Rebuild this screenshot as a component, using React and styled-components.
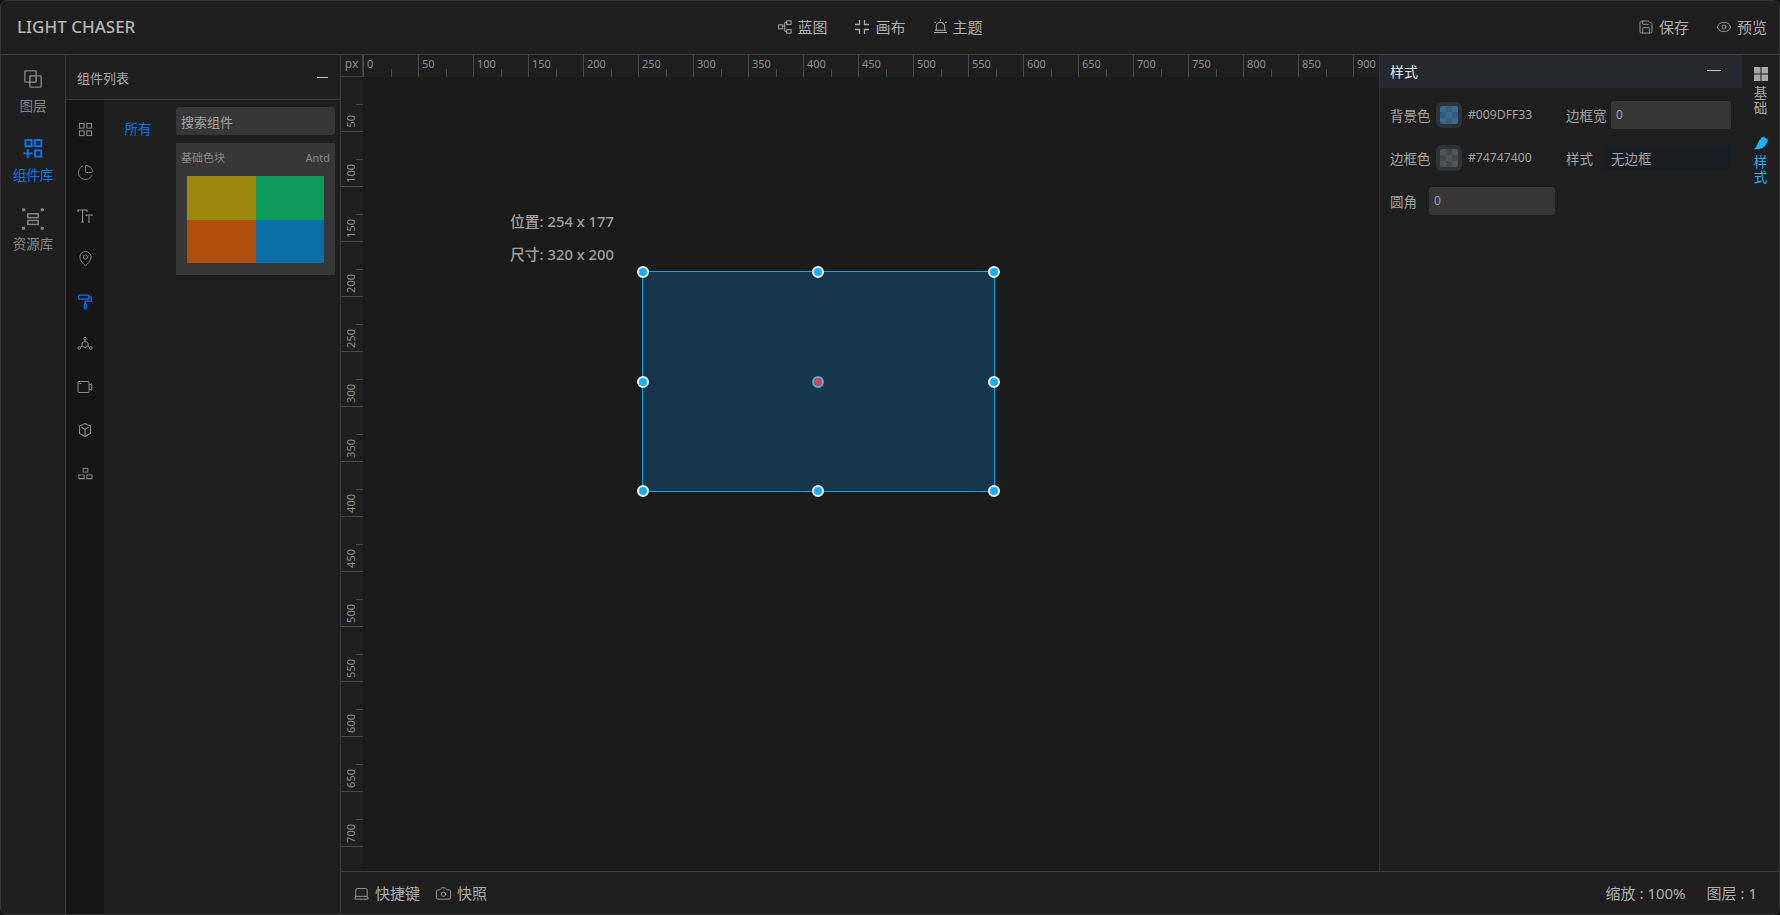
import React from 'react'
import styled, { createGlobalStyle } from 'styled-components'
import { PieChart, MapPin, Save, Eye, Laptop, Camera } from 'lucide-react'

const BLUE = '#0a74f5'
const SKY = '#1fb0ff'
const SCALE = 55

const Global = createGlobalStyle`
  * { box-sizing: border-box; }
  html, body { margin: 0; padding: 0; background: #141414; }
  body { font-family: "Noto Sans", "Noto Sans CJK SC", sans-serif; color: #a9a9a9; }
`

const Frame = styled.div`
  width: 1780px;
  height: 915px;
  display: flex;
  flex-direction: column;
  overflow: hidden;
  background: #1f1f1f;
  border: 1px solid #353535;
  border-radius: 7px;
`

const Header = styled.header`
  flex: 0 0 54px;
  display: grid;
  grid-template-columns: 1fr auto 1fr;
  align-items: center;
  padding: 0 12px 2px 16px;
  border-bottom: 1px solid #404040;
`
const Logo = styled.div`
  font-size: 17px;
  font-weight: 500;
  color: #b4b4b4;
`
const CenterNav = styled.nav`
  display: flex;
  gap: 27px;
  margin-right: 23px;
`
const RightNav = styled.nav`
  display: flex;
  justify-content: flex-end;
  gap: 27px;
`
const NavItem = styled.div`
  display: flex;
  align-items: center;
  gap: 5px;
  font-size: 15px;
  line-height: 20px;
  color: #adadad;
`

const Body = styled.div`
  flex: 1;
  min-height: 0;
  display: flex;
`

const Rail = styled.aside`
  flex: 0 0 65px;
  padding-top: 14px;
  display: flex;
  flex-direction: column;
  gap: 23px;
  border-right: 1px solid #3a3a3a;
`
const RailItem = styled.div`
  height: 46px;
  display: flex;
  flex-direction: column;
  align-items: center;
  justify-content: space-between;
  font-size: 13.5px;
  line-height: 18px;
  color: ${p => (p.$active ? BLUE : '#858585')};
`

const Panel = styled.section`
  flex: 0 0 275px;
  display: flex;
  flex-direction: column;
  border-right: 1px solid #3a3a3a;
`
const PanelHead = styled.div`
  flex: 0 0 45px;
  display: flex;
  align-items: center;
  justify-content: space-between;
  padding: 0 12px 0 11px;
  font-size: 13px;
  color: #a9a9a9;
  border-bottom: 1px solid #3a3a3a;
`
const Dash = styled.span`
  width: ${p => p.$w || 11}px;
  height: 1px;
  background: #c8c8c8;
`
const PanelBody = styled.div`
  flex: 1;
  display: flex;
`
const IconCol = styled.div`
  flex: 0 0 38px;
  padding-top: 8.5px;
  background: #161616;
`
const IconCell = styled.div`
  height: 42.9px;
  display: flex;
  align-items: center;
  justify-content: center;
  color: ${p => (p.$active ? BLUE : '#8d8d8d')};
`
const CatCol = styled.div`
  flex: 0 0 72px;
  padding: 20px 4px 0 0;
  text-align: center;
  font-size: 13.5px;
  line-height: 18px;
  color: ${BLUE};
`
const ListCol = styled.div`
  flex: 0 0 159px;
  padding-top: 7px;
`
const Search = styled.div`
  height: 28px;
  padding: 0 5px;
  display: flex;
  align-items: center;
  font-size: 13px;
  color: #a4a4a4;
  background: #373737;
  border-radius: 3px;
`
const Card = styled.div`
  height: 132px;
  margin-top: 8px;
  padding: 6px 5px 0;
  background: #373737;
`
const CardHead = styled.div`
  display: flex;
  justify-content: space-between;
  font-size: 11px;
  line-height: 18px;
  color: #8a8a8a;
`
const Thumb = styled.div`
  width: 137px;
  height: 87px;
  margin: 9px 0 0 6px;
  display: grid;
  grid-template-columns: 1fr 1fr;
  grid-template-rows: 1fr 1fr;
`
const Tint = styled.div`
  background: ${p => p.$c};
`

const Main = styled.main`
  flex: 1;
  min-width: 0;
  display: flex;
  flex-direction: column;
`
const Work = styled.div`
  flex: 1;
  min-height: 0;
  display: flex;
`
const Stage = styled.div`
  flex: 1;
  min-width: 0;
  display: flex;
  flex-direction: column;
`
const TopRuler = styled.div`
  flex: 0 0 22px;
  display: flex;
  overflow: hidden;
  background: #1f1f1f;
`
const Corner = styled.div`
  flex: 0 0 22px;
  padding-top: 1px;
  font-size: 12px;
  line-height: 15px;
  text-align: center;
  color: #888;
  border-right: 1px solid #3f3f3f;
  border-bottom: 1px solid #3f3f3f;
`
const HCell = styled.div`
  position: relative;
  flex: 0 0 ${SCALE}px;
  padding: 2px 0 0 3px;
  font-size: 11px;
  line-height: 13px;
  color: #8e8e8e;
  border-left: 1px solid #4a4a4a;
  &::after {
    content: '';
    position: absolute;
    left: 27px;
    bottom: 0;
    width: 1px;
    height: 8px;
    background: #4a4a4a;
  }
`
const StageBody = styled.div`
  flex: 1;
  min-height: 0;
  display: flex;
`
const LeftRuler = styled.div`
  flex: 0 0 22px;
  overflow: hidden;
  background: #1f1f1f;
`
const VCell = styled.div`
  position: relative;
  height: ${SCALE}px;
  display: flex;
  align-items: flex-end;
  justify-content: flex-start;
  padding: 0 0 3px 3px;
  border-bottom: 1px solid #4a4a4a;
  &::after {
    content: '';
    position: absolute;
    right: 0;
    top: 27px;
    width: 7px;
    height: 1px;
    background: #4a4a4a;
  }
`
const VLabel = styled.span`
  writing-mode: vertical-rl;
  transform: rotate(180deg);
  font-size: 11px;
  line-height: 13px;
  color: #8e8e8e;
`
const Canvas = styled.div`
  position: relative;
  flex: 1;
  background: #1b1b1b;
`
const Info = styled.div`
  position: absolute;
  left: 147px;
  top: 128px;
  font-size: 14.8px;
  line-height: 33px;
  font-weight: 500;
  color: #a0a0a0;
`
const Selection = styled.div`
  position: absolute;
  left: 279px;
  top: 194px;
  width: 353px;
  height: 221px;
  background: #16364b;
  border: 1px solid #12a4e6;
`
const Handle = styled.span`
  position: absolute;
  left: ${p => p.$x}%;
  top: ${p => p.$y}%;
  width: 12px;
  height: 12px;
  margin: -6px 0 0 -6.5px;
  border-radius: 50%;
  background: ${p => p.$c || '#19abff'};
  border: 2px solid ${p => (p.$c ? '#3fb6e6' : '#f2f6f8')};
`

const Config = styled.section`
  flex: 0 0 363px;
  display: flex;
  flex-direction: column;
  border-left: 1px solid #333;
`
const ConfigHead = styled.div`
  flex: 0 0 33px;
  display: flex;
  align-items: center;
  justify-content: space-between;
  padding: 0 21px 2px 10px;
  font-size: 14px;
  color: #e6e6e6;
  background: #262a30;
`
const ConfigGrid = styled.div`
  display: grid;
  grid-template-columns: 165px 165px;
  grid-auto-rows: 43px;
  column-gap: 11px;
  align-items: center;
  padding: 5px 0 0 10px;
`
const Field = styled.div`
  display: flex;
  align-items: center;
  font-size: 13.5px;
  color: #a3a3a3;
`
const FieldLabel = styled.span`
  flex: 0 0 ${p => p.$w}px;
`
const Swatch = styled.div`
  width: 26px;
  height: 26px;
  padding: 4px;
  border-radius: 6px;
  background: #2f3339;
`
const Checker = styled.div`
  width: 18px;
  height: 18px;
  border-radius: 2px;
  background: repeating-conic-gradient(${p => p.$a} 0 25%, ${p => p.$b} 0 50%) 0 0 / 12px 12px;
`
const Hex = styled.span`
  margin-left: 6px;
  font-size: 12.2px;
  color: #a0a0a0;
`
const Input = styled.div`
  flex: 1;
  height: 28px;
  padding: 0 5px;
  display: flex;
  align-items: center;
  font-size: 12px;
  color: #a3a3a3;
  background: #373737;
  border-radius: 3px;
`
const SelectBox = styled.div`
  flex: 1;
  height: 25px;
  margin-left: -7px;
  padding-left: 7px;
  display: flex;
  align-items: center;
  color: #a3a3a3;
  background: #1a1d22;
`

const SideTabs = styled.aside`
  flex: 0 0 37px;
  padding-top: 12px;
  display: flex;
  flex-direction: column;
  align-items: center;
  gap: 20px;
`
const SideTab = styled.div`
  width: 14px;
  display: flex;
  flex-direction: column;
  align-items: center;
  gap: 5px;
  font-size: 13.5px;
  line-height: 15px;
  text-align: center;
  color: ${p => (p.$active ? SKY : '#a9a9a9')};
`

const Footer = styled.footer`
  flex: 0 0 43px;
  display: flex;
  align-items: center;
  justify-content: space-between;
  padding: 0 22px 0 12px;
  border-top: 1px solid #3f3f3f;
  background: #1f1f1f;
`
const FootGroup = styled.div`
  display: flex;
  gap: ${p => p.$gap}px;
`

// drawn icons, the packages have no close match for these
const Svg = ({ s = 16, w, h, children, sw = 1.2, fill = 'none' }) =>
  <svg width={w || s} height={h || s} viewBox="0 0 16 16" fill={fill} stroke={fill === 'none' ? 'currentColor' : 'none'} strokeWidth={sw}>{children}</svg>

const LayersIcon = () =>
  <Svg s={20} sw={1.1}>
    <rect x="1.5" y="1.5" width="9" height="9" rx=".5" />
    <rect x="5.5" y="5.5" width="9" height="9" rx=".5" />
    <rect x="5.5" y="5.5" width="5" height="5" strokeWidth=".6" />
  </Svg>

const CompIcon = () =>
  <Svg s={22} sw={1.4}>
    <rect x="2.5" y="1.5" width="4.5" height="4.5" />
    <rect x="9.5" y="1.5" width="4.5" height="4.5" />
    <rect x="9.5" y="9" width="4.5" height="4.5" />
    <path d="M1 11.2h6.5M4.2 8v6.5" />
  </Svg>

const ResIcon = () =>
  <Svg s={24} sw={1}>
    <rect x="4.5" y="4.5" width="7" height="2.6" />
    <rect x="4.5" y="9" width="7" height="2.6" />
    <circle cx="1.8" cy="1.8" r=".7" />
    <circle cx="14.2" cy="1.8" r=".7" />
    <circle cx="1.8" cy="14.2" r=".7" />
    <circle cx="14.2" cy="14.2" r=".7" />
  </Svg>

const GridIcon = () =>
  <Svg s={15} sw={1.1}>
    <rect x="1.5" y="1.5" width="5" height="5" />
    <rect x="9.5" y="1.5" width="5" height="5" />
    <rect x="1.5" y="9.5" width="5" height="5" />
    <rect x="9.5" y="9.5" width="5" height="5" />
  </Svg>

const TextIcon = () =>
  <Svg s={16} sw={1.1}>
    <path d="M1 4V2h9v2M5.5 2v12M4 14h3M9 8V7h6v1M12 7v7M11 14h2" />
  </Svg>

const RollerIcon = () =>
  <Svg s={16} sw={1.2}>
    <rect x="1.8" y="1.2" width="10" height="4" rx=".6" />
    <path d="M11.8 3.2h2.4v4H8.3v2.3" />
    <rect x="7.3" y="9.5" width="2" height="5.5" rx=".8" />
  </Svg>

const GraphIcon = () =>
  <Svg s={16} sw={1}>
    <path d="M8 5l3 2v3l-3 1.6L5 10V7z" />
    <circle cx="8" cy="2.6" r="1.3" />
    <circle cx="2.2" cy="12" r="1.3" />
    <circle cx="13.8" cy="12" r="1.3" />
    <path d="M8 3.9V5M3.3 11.3L5 10M12.7 11.3L11 10" />
  </Svg>

const VideoIcon = () =>
  <Svg s={16} sw={1}>
    <rect x="1" y="2.5" width="11" height="11" rx="1" />
    <path d="M12 6l2.8-1.2v6.4L12 10M2.6 4.5h1.6" />
  </Svg>

const CubeIcon = () =>
  <Svg s={16} sw={1.1}>
    <path d="M8 1.5l5.5 2.6v7.4L8 14.5l-5.5-3V4.1z" />
    <path d="M4.5 5L8 7.5 11.5 5M8 7.5v7" />
  </Svg>

const BlocksIcon = () =>
  <Svg s={15} sw={1}>
    <rect x="5.5" y="2.5" width="5" height="4" />
    <rect x="1" y="9.5" width="5.5" height="4" />
    <rect x="9.5" y="9.5" width="5.5" height="4" />
    <path d="M1 13.5h5.5M9.5 13.5H15" />
  </Svg>

const BlueprintIcon = () =>
  <Svg s={14} sw={1.1}>
    <rect x=".7" y="5.5" width="4.6" height="4.6" />
    <rect x="10" y="1" width="5" height="4" />
    <rect x="10" y="11" width="5" height="4" />
    <path d="M5.3 7h2.5V3h2.2M7.8 7v6h2.2" />
  </Svg>

const CanvasIcon = () =>
  <Svg s={16} sw={1.3}>
    <path d="M5.5 1v4.5H1M10.5 1v4.5H15M5.5 15v-4.5H1M10.5 15v-4.5H15" />
  </Svg>

const AlarmIcon = () =>
  <Svg s={15} sw={1.1}>
    <path d="M3.5 12V8a4.5 4.5 0 0 1 9 0v4M1 14.5h14M2 12h12M8 .5v1.5M1.5 3l1.4 1.2M14.5 3l-1.4 1.2" />
  </Svg>

const FourSquares = () =>
  <Svg w={14} h={14} fill="#a9a9a9">
    <rect x="0" y="0" width="7.4" height="7.4" />
    <rect x="8.6" y="0" width="7.4" height="7.4" />
    <rect x="0" y="8.6" width="7.4" height="7.4" />
    <rect x="8.6" y="8.6" width="7.4" height="7.4" />
  </Svg>

const BrushIcon = () =>
  <Svg w={16} h={14} fill={SKY}>
    <path d="M0 15C2 13 3 12 4.5 8 6 4.5 8.5 1.5 10.5.5c1.5 1 3.5 2.5 5.5 3.5-1 3.5-2.5 7.5-6 9.5-3 1.5-7 2-10 1.5z" />
  </Svg>

const hTicks = Array.from({ length: 19 }, (_, i) => i * 50)
const vTicks = Array.from({ length: 14 }, (_, i) => (i + 1) * 50)
const handles = [[0, 0], [50, 0], [100, 0], [0, 50], [100, 50], [0, 100], [50, 100], [100, 100]]

const catIcons = [
  <GridIcon />, <PieChart size={17} strokeWidth={1.2} />, <TextIcon />, <MapPin size={17} strokeWidth={1.2} />,
  <RollerIcon />, <GraphIcon />, <VideoIcon />, <CubeIcon />, <BlocksIcon />,
]

export default function App() {
  return <>
    <Global />
    <Frame>
      <Header>
        <Logo>LIGHT CHASER</Logo>
        <CenterNav>
          <NavItem><BlueprintIcon />蓝图</NavItem>
          <NavItem><CanvasIcon />画布</NavItem>
          <NavItem><AlarmIcon />主题</NavItem>
        </CenterNav>
        <RightNav>
          <NavItem><Save size={16} strokeWidth={1.2} />保存</NavItem>
          <NavItem><Eye size={16} strokeWidth={1.2} />预览</NavItem>
        </RightNav>
      </Header>
      <Body>
        <Rail>
          <RailItem><LayersIcon />图层</RailItem>
          <RailItem $active><CompIcon />组件库</RailItem>
          <RailItem><ResIcon />资源库</RailItem>
        </Rail>
        <Panel>
          <PanelHead>组件列表<Dash /></PanelHead>
          <PanelBody>
            <IconCol>
              {catIcons.map((icon, i) => <IconCell key={i} $active={i === 4}>{icon}</IconCell>)}
            </IconCol>
            <CatCol>所有</CatCol>
            <ListCol>
              <Search>搜索组件</Search>
              <Card>
                <CardHead><span>基础色块</span><span>Antd</span></CardHead>
                <Thumb>
                  <Tint $c="#9c860c" />
                  <Tint $c="#0d9a5b" />
                  <Tint $c="#ae4d0c" />
                  <Tint $c="#0c6ea6" />
                </Thumb>
              </Card>
            </ListCol>
          </PanelBody>
        </Panel>
        <Main>
          <Work>
            <Stage>
              <TopRuler>
                <Corner>px</Corner>
                {hTicks.map(n => <HCell key={n}>{n}</HCell>)}
              </TopRuler>
              <StageBody>
                <LeftRuler>
                  {vTicks.map(n => <VCell key={n}><VLabel>{n}</VLabel></VCell>)}
                </LeftRuler>
                <Canvas>
                  <Info>位置: 254 x 177<br />尺寸: 320 x 200</Info>
                  <Selection>
                    {handles.map(([x, y]) => <Handle key={`${x}-${y}`} $x={x} $y={y} />)}
                    <Handle $x={50} $y={50} $c="#d8405a" />
                  </Selection>
                </Canvas>
              </StageBody>
            </Stage>
            <Config>
              <ConfigHead>样式<Dash $w={14} /></ConfigHead>
              <ConfigGrid>
                <Field>
                  <FieldLabel $w={46}>背景色</FieldLabel>
                  <Swatch><Checker $a="#335f82" $b="#3c6a8d" /></Swatch>
                  <Hex>#009DFF33</Hex>
                </Field>
                <Field>
                  <FieldLabel $w={45}>边框宽</FieldLabel>
                  <Input>0</Input>
                </Field>
                <Field>
                  <FieldLabel $w={46}>边框色</FieldLabel>
                  <Swatch><Checker $a="#45474c" $b="#525459" /></Swatch>
                  <Hex>#74747400</Hex>
                </Field>
                <Field>
                  <FieldLabel $w={45}>样式</FieldLabel>
                  <SelectBox>无边框</SelectBox>
                </Field>
                <Field>
                  <FieldLabel $w={39}>圆角</FieldLabel>
                  <Input>0</Input>
                </Field>
              </ConfigGrid>
            </Config>
            <SideTabs>
              <SideTab><FourSquares />基础</SideTab>
              <SideTab $active><BrushIcon />样式</SideTab>
            </SideTabs>
          </Work>
          <Footer>
            <FootGroup $gap={15}>
              <NavItem><Laptop size={17} strokeWidth={1.2} />快捷键</NavItem>
              <NavItem><Camera size={17} strokeWidth={1.2} />快照</NavItem>
            </FootGroup>
            <FootGroup $gap={21}>
              <NavItem>缩放 : 100%</NavItem>
              <NavItem>图层 : 1</NavItem>
            </FootGroup>
          </Footer>
        </Main>
      </Body>
    </Frame>
  </>
}
